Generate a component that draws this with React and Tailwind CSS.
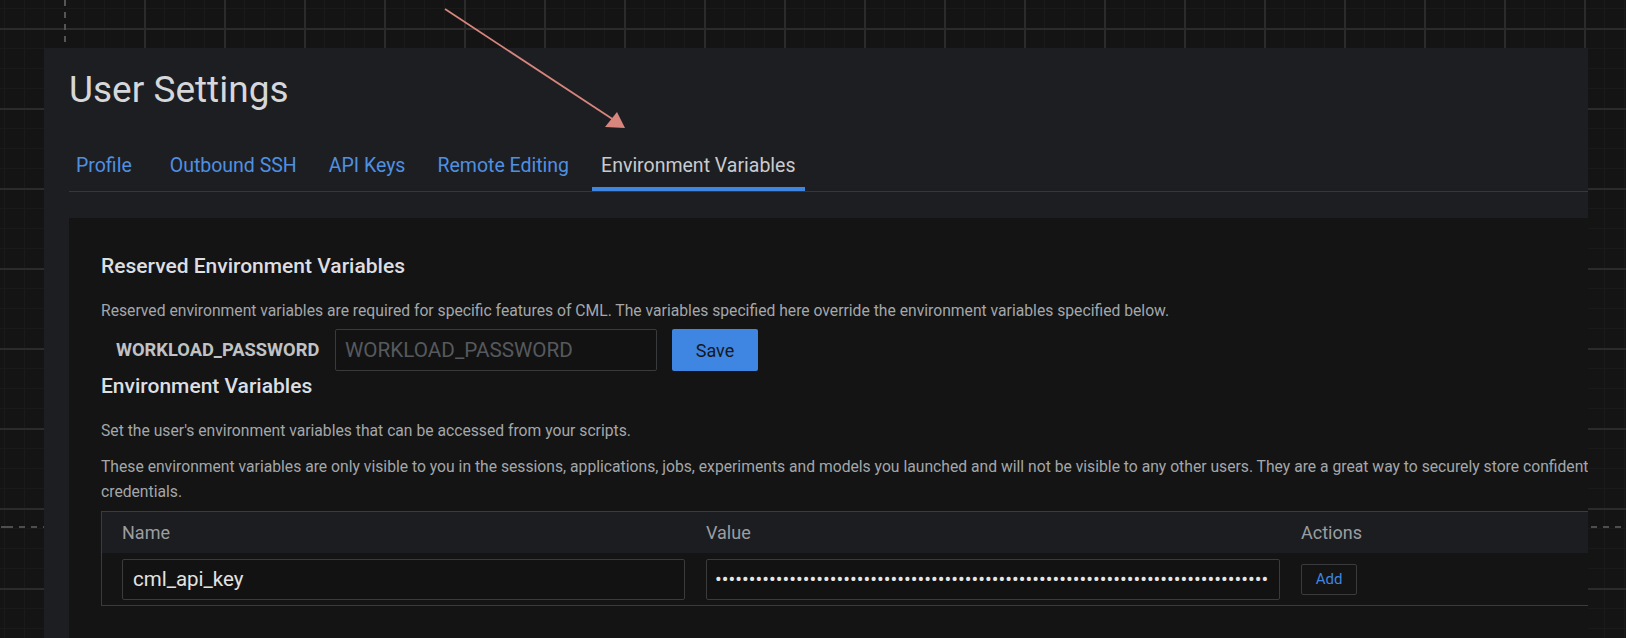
import React from 'react';

const tabs = ['Profile', 'Outbound SSH', 'API Keys', 'Remote Editing', 'Environment Variables'];
const secret = '•'.repeat(82);

const App = () => {
  return (
    <div className="relative h-[638px] w-full overflow-hidden bg-[#141414] font-[Roboto,sans-serif] bg-[linear-gradient(to_right,#2b2b2b_2px,transparent_2px),linear-gradient(to_bottom,#2b2b2b_2px,transparent_2px),linear-gradient(to_right,#1a1a1a_1px,transparent_1px),linear-gradient(to_bottom,#1a1a1a_1px,transparent_1px)] bg-[size:80px_80px,80px_80px,20px_20px,20px_20px] bg-[position:64px_28px,64px_28px,64px_28px,64px_28px]">
      {/* guide lines */}
      <div className="absolute left-[64px] top-0 h-[48px] w-[2px] bg-[repeating-linear-gradient(to_bottom,#555_0_6px,#141414_6px_12px)]" />
      <div className="absolute left-0 top-[526px] h-[2px] w-full bg-[repeating-linear-gradient(to_right,#4e4e4e_0_6px,transparent_6px_12px)] bg-[position:7px_0]" />

      {/* ── Settings panel ── */}
      <div className="relative ml-[44px] mt-[48px] h-[590px] w-[1544px] overflow-hidden bg-[#1d1e21] pl-[25px] pt-[24px]">
        <h1 className="text-[37px] leading-[36px] font-normal text-[#d5d7da]">User Settings</h1>

        {/* Tabs */}
        <div className="mt-[46px] flex w-[1600px] items-end border-b border-[#35373a]">
          {tabs.map((t, i) => {
            const active = t === 'Environment Variables';
            return (
              <div
                key={t}
                className={`px-[9px] pb-[9px] text-[19.5px] leading-[24px] border-b-4 ${i === 0 ? 'ml-[-2px] mr-[20px]' : 'mr-[14px]'} ${active ? 'border-[#3f86e0] text-[#c9cbce]' : 'border-transparent text-[#4f90e2]'}`}
              >
                {t}
              </div>
            );
          })}
        </div>

        {/* Card */}
        <div className="mt-[26px] h-[500px] w-[1610px] bg-[#141414] pl-[32px] pr-[32px] pt-[34px]">
          <h2 className="text-[21px] leading-[28px] font-medium text-[#dcdee1]">Reserved Environment Variables</h2>
          <p className="mt-[20px] text-[15.7px] leading-[22px] text-[#a3a7ab]">
            Reserved environment variables are required for specific features of CML. The variables specified here override the environment variables specified below.
          </p>

          <div className="mt-[7px] flex items-center">
            <span className="ml-[15px] w-[219px] text-[18.3px] font-bold text-[#c0c2c5]">WORKLOAD_PASSWORD</span>
            <input
              placeholder="WORKLOAD_PASSWORD"
              className="h-[42px] w-[322px] rounded-[2px] border border-[#393a3c] bg-[#121212] px-[9px] text-[20.7px] text-[#e0e0e0] outline-none placeholder:text-[#56595d]"
            />
            <button className="ml-[15px] h-[42px] w-[86px] rounded-[2px] bg-[#3f86e2] text-[18px] text-[#15181c]">Save</button>
          </div>

          <h2 className="mt-[1px] text-[21px] leading-[28px] font-medium text-[#dcdee1]">Environment Variables</h2>
          <p className="mt-[20px] text-[15.7px] leading-[22px] text-[#a3a7ab]">
            Set the user's environment variables that can be accessed from your scripts.
          </p>
          <p className="mt-[12px] text-[15.7px] leading-[25px] text-[#a3a7ab]">
            These environment variables are only visible to you in the sessions, applications, jobs, experiments and models you launched and will not be visible to any other users. They are a great way to securely store confidential credentials.
          </p>

          {/* Table */}
          <div className="mt-[7px] border border-[#3a3b3d]">
            <div className="grid h-[41px] grid-cols-[583px_595px_1fr] items-center bg-[#1c1d20] text-[18px] text-[#9a9da1]">
              <span className="pl-[20px]">Name</span>
              <span className="pl-[21px]">Value</span>
              <span className="pl-[21px]">Actions</span>
            </div>
            <div className="grid h-[52px] grid-cols-[583px_595px_1fr] items-center">
              <div className="pl-[20px]">
                <input
                  readOnly
                  value="cml_api_key"
                  className="h-[41px] w-full rounded-[2px] border border-[#3a3b3d] bg-[#121212] px-[10px] text-[20.5px] text-[#e3e3e3] outline-none"
                />
              </div>
              <div className="pl-[21px]">
                <input
                  readOnly
                  value={secret}
                  className="h-[41px] w-full rounded-[2px] border border-[#3a3b3d] bg-[#121212] px-[8px] text-[20px] text-[#e6e6e6] outline-none"
                />
              </div>
              <div className="pl-[21px]">
                <button className="h-[31px] w-[56px] rounded-[2px] border border-[#3a3b3d] bg-[#141414] text-[15px] text-[#3f86e0]">Add</button>
              </div>
            </div>
          </div>
        </div>
      </div>

      {/* annotation arrow */}
      <svg className="pointer-events-none absolute left-0 top-0" width="1626" height="638">
        <line x1="445" y1="9" x2="617" y2="122" stroke="#d7857d" strokeWidth="1.8" />
        <polygon points="625,128 605,127 617,112" fill="#d7857d" />
      </svg>
    </div>
  );
};

export default App;
